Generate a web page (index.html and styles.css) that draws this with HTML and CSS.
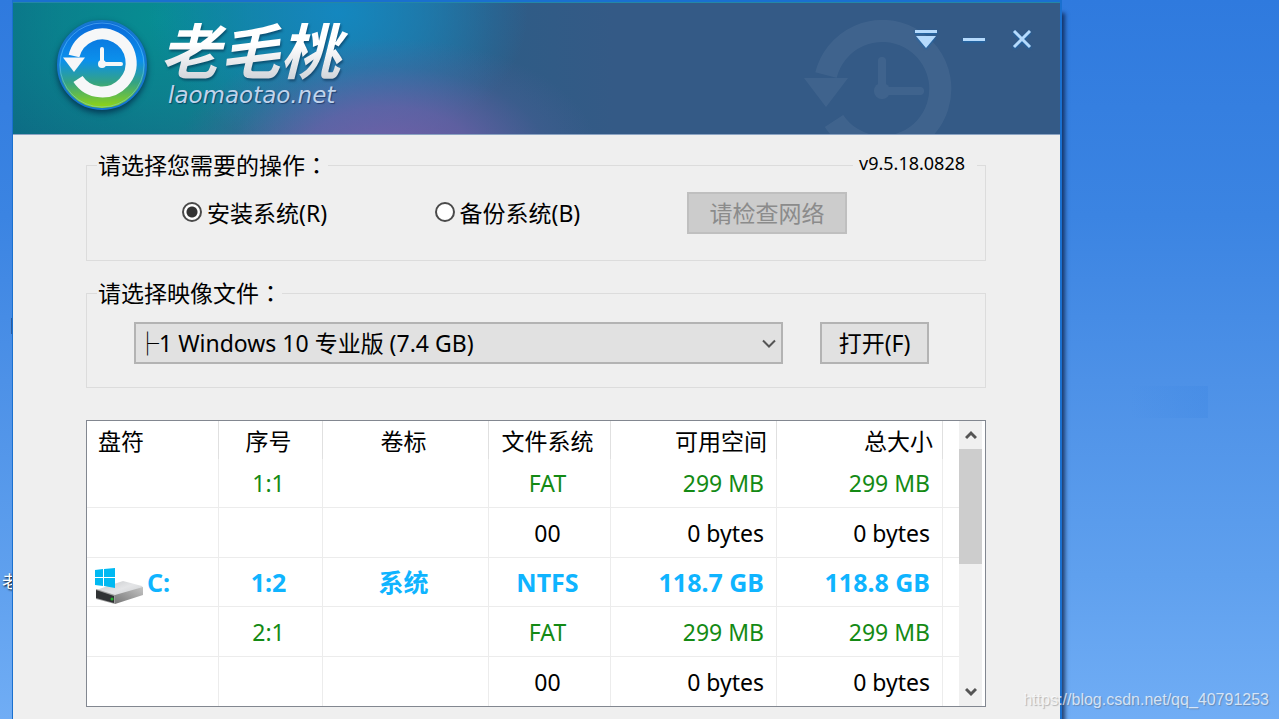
FILE: index.html
```html
<!DOCTYPE html>
<html lang="zh-CN">
<head>
<meta charset="utf-8">
<title>老毛桃</title>
<meta name="viewport" content="width=device-width, initial-scale=1">
<link rel="stylesheet" href="styles.css">
</head>
<body>
<svg class="defs" width="0" height="0" aria-hidden="true">
  <symbol id="clock-arrow" viewBox="0 0 80 80" overflow="visible">
    <path d="M12 32A29 29 0 1 1 16 55" fill="none" stroke="currentColor" stroke-width="11"/>
    <path d="M1 33.500H23L12 48Z" fill="currentColor"/>
    <path d="M40 25V40H59" fill="none" stroke="currentColor" stroke-width="4" stroke-linecap="round" stroke-linejoin="round"/>
    <circle cx="40" cy="40" r="4" fill="currentColor"/>
  </symbol>
</svg>
<div class="desktop">
  <div class="strip"><span class="sliver"></span><span class="shortcut">老</span></div>
  <div class="window">
    <header class="titlebar">
      <svg class="ghost" viewBox="0 0 80 80" aria-hidden="true"><use href="#clock-arrow"/></svg>
      <div class="brand">
        <svg class="logo" viewBox="0 0 92 92" aria-hidden="true">
          <defs>
            <linearGradient id="disc" x1="0" y1="0" x2="0" y2="1">
              <stop offset="0" stop-color="#0a68d8"/><stop offset=".45" stop-color="#0b90ec"/>
              <stop offset=".7" stop-color="#35a383"/><stop offset="1" stop-color="#97d80c"/>
            </linearGradient>
          </defs>
          <circle cx="46" cy="46" r="44" fill="url(#disc)" stroke="#1678cf" stroke-width="2"/>
          <circle cx="46" cy="46" r="42" fill="none" stroke="#7fd0ff" stroke-opacity=".45"/>
          <use class="mark" href="#clock-arrow" x="6" y="5" width="80" height="80"/>
        </svg>
        <div class="names">
          <span class="name">老毛桃</span>
          <span class="site">laomaotao.net</span>
        </div>
      </div>
      <div class="controls">
        <button type="button" aria-label="菜单"><svg width="22" height="20" viewBox="0 0 22 20"><path d="M0 0H22V3H0ZM1 6H21L11 18Z"/></svg></button>
        <button type="button" aria-label="最小化"><svg width="22" height="20" viewBox="0 0 22 20"><path d="M0 8H22V11H0Z"/></svg></button>
        <button type="button" aria-label="关闭"><svg width="20" height="20" viewBox="0 0 20 20"><path d="M2 1L18 17M18 1L2 17" fill="none" stroke="#b5dafc" stroke-width="3"/></svg></button>
      </div>
    </header>
    <main class="content">
      <fieldset class="group">
        <legend>请选择您需要的操作<span class="colon" lang="zh-TW">：</span></legend>
        <span class="version">v9.5.18.0828</span>
        <div class="action-row">
          <label class="choice"><input type="radio" name="mode" checked>安装系统(R)</label>
          <label class="choice"><input type="radio" name="mode">备份系统(B)</label>
          <button class="button" type="button" disabled>请检查网络</button>
        </div>
      </fieldset>
      <fieldset class="group image">
        <legend>请选择映像文件<span class="colon" lang="zh-TW">：</span></legend>
        <div class="image-row">
          <div class="picker">
            <select aria-label="映像文件"><option>├1 Windows 10 专业版 (7.4 GB)</option></select>
            <svg width="14" height="10" viewBox="0 0 14 10" aria-hidden="true"><path d="M1 1.500L7 7.500L13 1.500"/></svg>
          </div>
          <button class="button" type="button">打开(F)</button>
        </div>
      </fieldset>
      <div class="list">
        <table>
          <thead>
            <tr><th class="drive">盘符</th><th class="index">序号</th><th>卷标</th><th class="fs">文件系统</th><th class="size">可用空间</th><th class="size">总大小</th><th class="rest"></th></tr>
          </thead>
          <tbody>
            <tr class="hidden-part"><td></td><td>1:1</td><td></td><td>FAT</td><td>299 MB</td><td>299 MB</td><td></td></tr>
            <tr><td></td><td></td><td></td><td>00</td><td>0 bytes</td><td>0 bytes</td><td></td></tr>
            <tr class="system"><td>
              <div class="volume">
                <svg width="48" height="36" viewBox="0 0 48 36" aria-hidden="true">
                  <defs>
                    <linearGradient id="top" x1="0" y1="0" x2="1" y2="1"><stop offset="0" stop-color="#c4c6c8"/><stop offset=".5" stop-color="#e4e5e7"/><stop offset="1" stop-color="#c8cacc"/></linearGradient>
                    <linearGradient id="side" x1="0" y1="1" x2="1" y2="0"><stop offset="0" stop-color="#777"/><stop offset="1" stop-color="#c4c4c4"/></linearGradient>
                  </defs>
                  <path d="M1 22L28 13L47 18L48 20L20 30Z" fill="url(#top)"/>
                  <path d="M20 27L48 19V27L20 36Z" fill="url(#side)"/>
                  <path d="M1 21L20 27V36L1 31Z" fill="#9b9b9b"/>
                  <path d="M1 22L19 28V35L1 30Z" fill="#303234"/>
                  <circle cx="17" cy="31" r="1.500" fill="#25b02d"/>
                  <path d="M0 2L8 1V9H0ZM9 1L20 0V9H9ZM0 10H8V18L0 17ZM9 10H20V20L9 18Z" fill="#00b9f2"/>
                </svg>
                <span>C:</span>
              </div></td><td>1:2</td><td>系统</td><td>NTFS</td><td>118.7 GB</td><td>118.8 GB</td><td></td></tr>
            <tr class="hidden-part"><td></td><td>2:1</td><td></td><td>FAT</td><td>299 MB</td><td>299 MB</td><td></td></tr>
            <tr><td></td><td></td><td></td><td>00</td><td>0 bytes</td><td>0 bytes</td><td></td></tr>
          </tbody>
        </table>
        <div class="scrollbar">
          <button type="button" aria-label="向上"><svg width="12" height="10" viewBox="0 0 12 10"><path d="M1 8L6 3L11 8"/></svg></button>
          <div class="thumb"></div>
          <button type="button" aria-label="向下"><svg width="12" height="10" viewBox="0 0 12 10"><path d="M1 2L6 7L11 2"/></svg></button>
        </div>
      </div>
    </main>
  </div>
  <span class="smudge"></span>
  <span class="watermark">https://blog.csdn.net/qq_40791253</span>
</div>
</body>
</html>
```
FILE: styles.css
```css
* { box-sizing: border-box; }

body {
  margin: 0;
  overflow: hidden;
  color: #000;
  font: 23px/30px "Noto Sans", "Noto Sans CJK SC", sans-serif;
}

button, select, input { font: inherit; color: inherit; }
button { padding: 0; border: 0; background: none; }
svg { display: block; }
.defs { position: absolute; }

.desktop {
  position: relative;
  display: flex;
  min-height: 100vh;
  padding-right: 217px;
  background: linear-gradient(#2f7ade 0%, #3b84e2 30%, #4d91e7 53%, #5fa0ee 80%, #70adf5 100%);
}

.strip { position: relative; width: 12px; flex: none; overflow: hidden; }
.sliver { position: absolute; top: 318px; right: 0; width: 1px; height: 16px; background: #2b5d9e; }
.shortcut {
  position: absolute;
  top: 567px;
  left: 2px;
  color: #fff;
  font-size: 17px;
  white-space: nowrap;
  text-shadow: 1px 1px 2px #000;
}

.window {
  flex: 1;
  min-width: 0;
  border: solid #1a70cf;
  border-width: 2px 2px 0 1px;
  background: #efefef;
  box-shadow: 4px 12px 4px -1px rgba(10, 30, 70, .75);
}

.titlebar {
  position: relative;
  display: flex;
  justify-content: space-between;
  height: 133px;
  overflow: hidden;
  border-top: 1px solid #2487a6;
  border-bottom: 1px solid #8ba3c2;
  background:
    radial-gradient(ellipse 210px 115px at 375px 150px, rgba(120, 95, 170, .9), rgba(110, 95, 168, .75) 40%, rgba(85, 95, 155, .3) 75%, rgba(70, 90, 145, 0)),
    radial-gradient(ellipse 190px 140px at 325px 10px, #1487bf, rgba(20, 135, 191, .6) 45%, rgba(20, 135, 191, 0)),
    radial-gradient(ellipse 220px 170px at 145px 15px, #078d92, rgba(7, 141, 146, .65) 45%, rgba(7, 141, 146, 0)),
    linear-gradient(90deg, #0d6a84, #116983 110px, #2a6d93 320px, #2e5c86 480px, #345a86 600px);
}

.ghost {
  position: absolute;
  top: 8px;
  right: 98px;
  width: 160px;
  height: 160px;
  overflow: visible;
  color: #fff;
  opacity: .055;
}

.brand { display: flex; gap: 12px; padding: 16px 0 0 43px; }
.logo { width: 92px; height: 92px; overflow: visible; filter: drop-shadow(0 3px 3px rgba(0, 25, 60, .7)); }
.mark { color: #f6f7f8; }
.names { display: flex; flex-direction: column; font-style: italic; }
.name {
  padding-right: 8px;
  background: linear-gradient(#fff 40%, #ccd0d6);
  background-clip: text;
  color: transparent;
  font-size: 60px;
  font-weight: 700;
  line-height: 64px;
  filter: drop-shadow(1px 2px 1px rgba(0, 30, 60, .5));
}
.site {
  padding-left: 8px;
  color: #c0d4ec;
  font: italic 23px/24px "DejaVu Sans", sans-serif;
  text-shadow: 1px 1px 1px rgba(0, 20, 60, .5);
}

.controls { position: relative; display: flex; height: 40px; margin: 17px 14px 0 0; }
.controls button { display: grid; place-items: center; width: 48px; }
.controls svg { fill: #b5dafc; filter: drop-shadow(0 1px 1px #1b67ad); }

.content { display: flex; flex-direction: column; padding: 15px 74px 11px 73px; }

.group { position: relative; min-width: 0; margin: 0; padding: 0; border: 1px solid #dcdcdc; }
.group legend { margin-left: 10px; padding: 0 0 0 1px; }
.colon { font-family: "Noto Sans CJK TC", sans-serif; line-height: 1; }
.image { margin-top: 17px; }
.version {
  position: absolute;
  top: -32px;
  right: 8px;
  padding: 0 12px 0 6px;
  background: #efefef;
  font-size: 18px;
}

.action-row {
  display: grid;
  grid-template-columns: 1fr 1fr 160px;
  align-items: center;
  padding: 12px 138px 26px 95px;
}
.choice { display: flex; align-items: center; gap: 5px; white-space: nowrap; }
.choice input {
  appearance: none;
  width: 20px;
  height: 20px;
  margin: 0 0 3px;
  border: 2px solid #4a4a4a;
  border-radius: 50%;
  background: #fff;
}
.choice input:checked { background: radial-gradient(circle, #333 5px, #fff 6px); }

.button { height: 42px; border: 2px solid #b3b3b3; background: #e1e1e1; }
.button:disabled { border-color: #bfbfbf; background: #ccc; color: #8b8b8b; }

.image-row { display: grid; grid-template-columns: 1fr 109px; gap: 37px; padding: 14px 56px 23px 47px; }
.picker { position: relative; }
.picker select {
  appearance: none;
  width: 100%;
  height: 42px;
  padding: 0 36px 0 0;
  border: 2px solid #b3b3b3;
  border-radius: 0;
  background: #e1e1e1;
}
.picker svg { position: absolute; top: 17px; right: 7px; fill: none; stroke: #555; stroke-width: 2; }

.list { display: flex; margin-top: 32px; padding-right: 3px; border: 1px solid #828790; background: #fff; }
table { flex: 1; min-width: 0; border-collapse: separate; border-spacing: 0; table-layout: fixed; }
th, td {
  height: 49px;
  padding: 0 4px 0 0;
  border: solid #ececec;
  border-width: 0 1px 1px 0;
  text-align: center;
  white-space: nowrap;
}
tr:nth-child(even) td { height: 50px; }
tbody tr:last-child td { border-bottom: 0; }
th { height: 38px; padding-top: 2px; border-bottom: 0; border-color: #e0e0e0; font-weight: 400; }
th:last-child, td:last-child { border-right: 0; }
.drive { width: 132px; padding-left: 11px; text-align: left; }
.index { width: 104px; }
.fs { width: 122px; }
.size { width: 166px; padding-right: 9px; text-align: right; }
.rest { width: 16px; }
td:nth-child(5), td:nth-child(6) { padding-right: 12px; text-align: right; }
.hidden-part { color: #148a14; }
.system { color: #0fb4ff; font-size: 25px; font-weight: 700; }
.volume { display: flex; align-items: center; gap: 4px; padding-left: 8px; }
.volume svg { margin-top: 8px; }

.scrollbar { display: flex; flex-direction: column; width: 23px; background: #f0f0f0; }
.scrollbar button { display: grid; place-items: center; height: 28px; }
.scrollbar button:last-child { margin-top: auto; }
.scrollbar svg { fill: none; stroke: #555; stroke-width: 3; }
.thumb { height: 115px; background: #cdcdcd; }

.smudge {
  position: absolute;
  top: 386px;
  right: 71px;
  width: 78px;
  height: 32px;
  background: linear-gradient(90deg, rgba(55, 130, 225, 0), rgba(55, 130, 225, .25));
}
.watermark {
  position: absolute;
  right: 10px;
  bottom: 4px;
  color: rgba(255, 255, 255, .72);
  font: 16px/30px "Liberation Sans", Arial, sans-serif;
  text-shadow: 1px 1px 1px rgba(90, 90, 90, .4);
}
```
